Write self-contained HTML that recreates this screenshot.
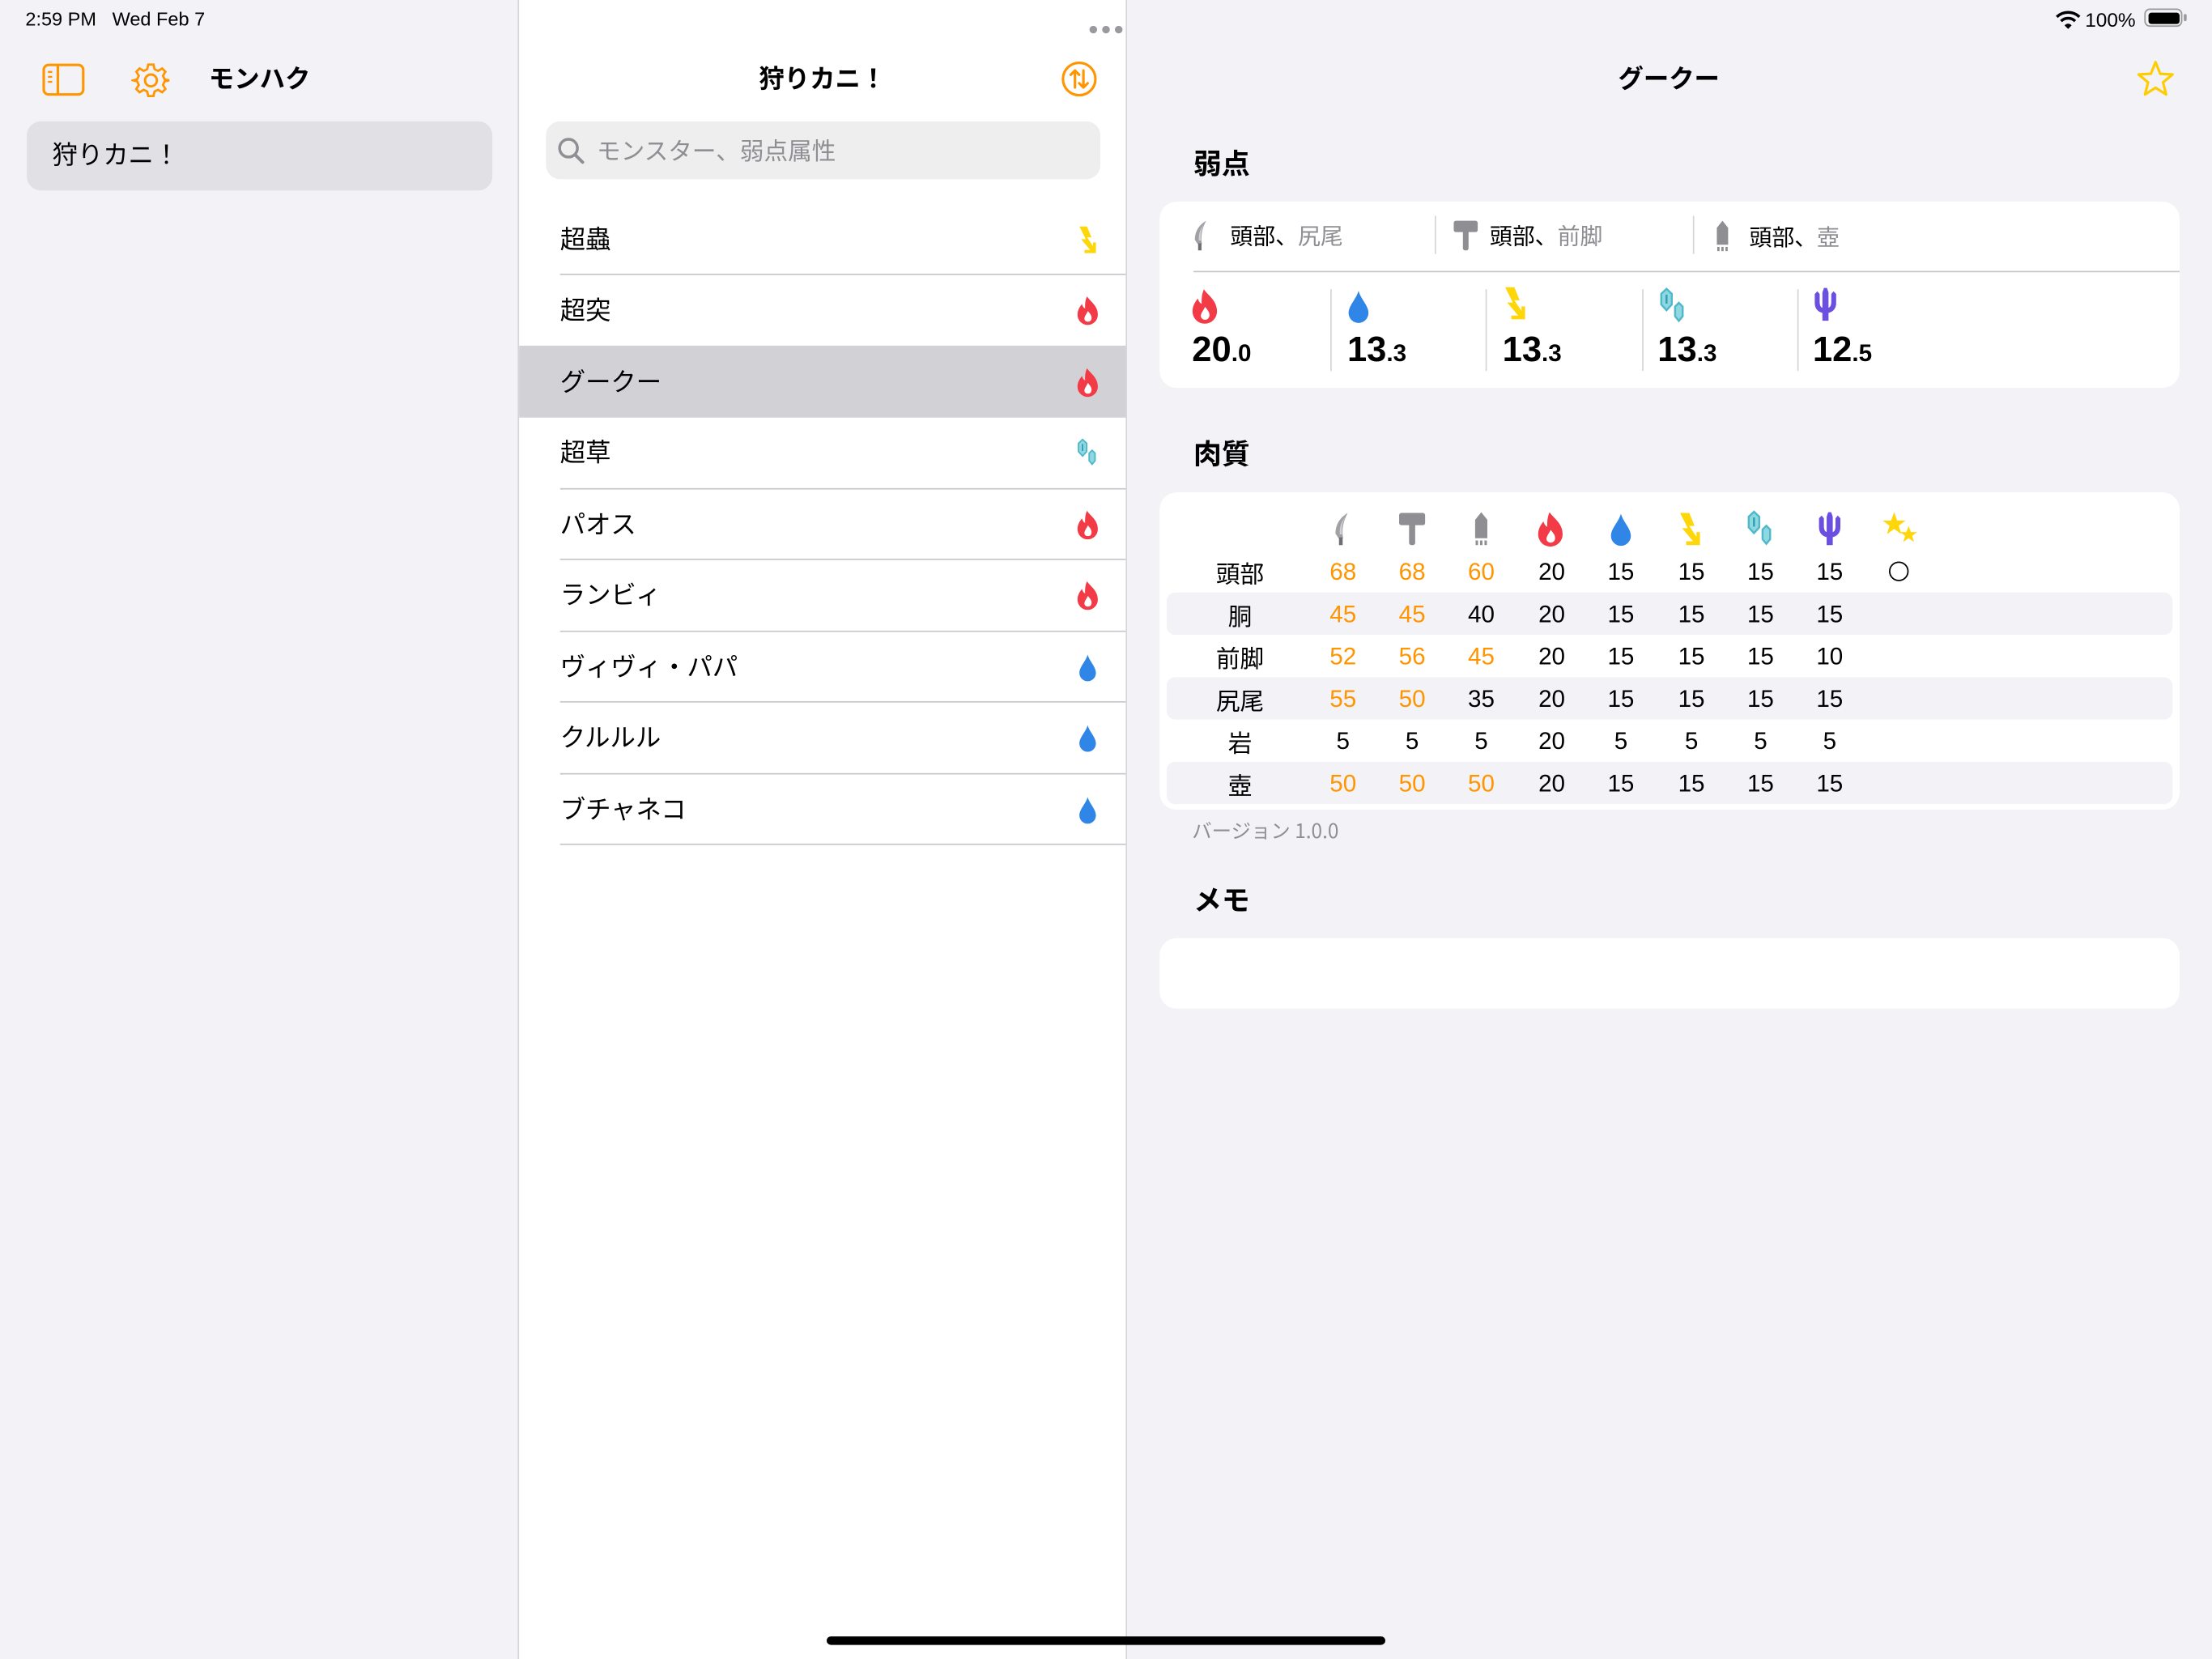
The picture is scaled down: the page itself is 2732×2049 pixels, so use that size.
<!DOCTYPE html>
<html><head><meta charset="utf-8">
<style>
html,body{margin:0;padding:0;width:2732px;height:2048px;overflow:hidden;background:#f2f2f7}
#w{position:absolute;left:0;top:0;width:1568px;height:1176px;transform:scale(1.742347);transform-origin:0 0;font-family:"Liberation Sans","Noto Sans CJK JP",sans-serif;color:#000}
.a{position:absolute}
.jp{font-family:"Noto Sans CJK JP","Liberation Sans",sans-serif}
.t{position:absolute;white-space:nowrap;line-height:1}
.row{position:absolute;left:368px;width:430px;height:50px}
.row .n{position:absolute;left:29px;top:13px;font-size:18px;line-height:22px}
.row .i{position:absolute;left:394px;top:14px;width:18px;height:22px}
.sep{position:absolute;left:397px;width:401px;height:1px;background:#c8c8cc}
.num{position:absolute;font-size:25px;font-weight:bold;line-height:1}
.num small{font-size:17px}
.c{position:absolute;width:40px;text-align:center;font-size:17px;line-height:20px}
.o{color:#ff9500}
.stripe{position:absolute;left:827px;width:713px;height:30px;background:#f2f2f7;border-radius:6px}
</style></head><body>
<svg width="0" height="0" style="position:absolute">
<defs>
<symbol id="fire" viewBox="0 0 20 24"><path fill="#f23b46" d="M9.5 1C12 5 18 8 18 15.5A8 8 0 0 1 2 15.5C2 12 3.5 9.5 5.5 7C6 8.8 6.8 10 8 10.5C7.8 7 8.2 3.5 9.5 1Z"/><path fill="#fff" d="M10.2 12.5C12 14.7 13.5 16.3 13 18.8A2.9 2.9 0 0 1 7.4 18.8C7.4 16.5 9.2 14.8 10.2 12.5Z"/></symbol>
<symbol id="water" viewBox="0 0 20 24"><path fill="#2f86e6" d="M10 2C11.5 7.5 16.5 11.5 16.5 16.5A6.5 6.5 0 0 1 3.5 16.5C3.5 11.5 8.5 7.5 10 2Z"/></symbol>
<symbol id="thunder" viewBox="0 0 20 24"><path fill="#ffd60a" d="M3.5 1.5H9.5L13 10H9.5L14.2 17V14H16.5V22.5H7.5V20H12L4.8 11.5H8.5Z"/></symbol>
<symbol id="ice" viewBox="0 0 20 24"><path fill="#8fd8e2" stroke="#4fb8c9" stroke-width="1.2" d="M6 1.5L9.2 4.5V11L6 14.5L2.8 11V4.5Z"/><path fill="none" stroke="#2f9fb4" stroke-width="1.2" d="M6 5V10.5"/><path fill="#8fd8e2" stroke="#4fb8c9" stroke-width="1.2" d="M13.5 10L15.8 12.3V18.2L13.5 21L11.2 18.2V12.3Z"/></symbol>
<symbol id="dragon" viewBox="0 0 20 24"><path fill="#6b4fe0" d="M9 1L11 1L12 4V14C13.3 13.5 13.8 12 13.8 10V5L15.3 3.2L17 5V11C17 14.8 14.5 16.8 12 17.3V22.5H8V17.3C5.5 16.8 3 14.8 3 11V5L4.7 3.2L6.2 5V10C6.2 12 6.7 13.5 8 14V4Z"/></symbol>
<symbol id="cut" viewBox="0 0 20 24"><path fill="#a0a0a5" d="M14 1.5C9 4.5 6 9 6 15L8 18H11C10 12.5 11 7 14 1.5Z"/><path fill="#6e6e73" d="M8.3 17.5H10.7V22.5H8.3Z"/><path fill="#d1d1d6" d="M12.5 4C10.5 7.5 9.8 11 10.3 15.5L8.8 15.5C8.5 11 9.8 7 12.5 4Z"/></symbol>
<symbol id="hammer" viewBox="0 0 20 24"><rect x="1.5" y="1.5" width="17" height="8" rx="1.5" fill="#8e8e93"/><rect x="8" y="8" width="4" height="14.5" rx="1.5" fill="#8e8e93"/></symbol>
<symbol id="shot" viewBox="0 0 20 24"><path fill="#8e8e93" d="M10 1L14 6V18H6V6Z"/><rect x="6.3" y="19.5" width="1.6" height="3" fill="#8e8e93"/><rect x="9.2" y="19.5" width="1.6" height="3" fill="#8e8e93"/><rect x="12.1" y="19.5" width="1.6" height="3" fill="#8e8e93"/></symbol>
<symbol id="stars" viewBox="0 0 24 24"><path fill="#ffd60a" d="M8 1L10 6.5H15.5L11 9.8L12.7 15.3L8 12L3.3 15.3L5 9.8L0.5 6.5H6Z"/><path fill="#ffd60a" d="M17.5 10L19 14H23L19.8 16.5L21 20.5L17.5 18L14 20.5L15.2 16.5L12 14H16Z"/></symbol>
</defs></svg>
<div id="w">
<div class="a" style="left:0;top:0;width:367px;height:1176px;background:#f2f2f7"></div>
<div class="a" style="left:367px;top:0;width:1px;height:1176px;background:#d6d6da"></div>
<div class="a" style="left:368px;top:0;width:430px;height:1176px;background:#fff"></div>
<div class="a" style="left:798px;top:0;width:1px;height:1176px;background:#d6d6da"></div>
<div class="a" style="left:799px;top:0;width:769px;height:1176px;background:#f2f2f7"></div>

<div class="t" style="left:18px;top:7px;font-size:13.5px">2:59 PM&nbsp;&nbsp;&nbsp;Wed Feb 7</div>
<div class="a" style="left:772px;top:11px"><svg width="26" height="6"><circle cx="3" cy="3" r="2.7" fill="#9a9a9e"/><circle cx="12" cy="3" r="2.7" fill="#9a9a9e"/><circle cx="21" cy="3" r="2.7" fill="#9a9a9e"/></svg></div>
<svg class="a" style="left:1457px;top:7px" width="18" height="14" viewBox="0 0 18 14"><path d="M1 5A11.5 11.5 0 0 1 17 5" stroke="#000" stroke-width="2" fill="none"/><path d="M4 8A7 7 0 0 1 14 8" stroke="#000" stroke-width="2" fill="none"/><path d="M6.5 11A3.2 3.2 0 0 1 11.5 11L9 13.5Z" fill="#000"/></svg>
<div class="t" style="left:1478px;top:7px;font-size:14px">100%</div>
<div class="a" style="left:1520px;top:6px;width:27px;height:13px;border:1.3px solid #999;border-radius:4px;box-sizing:border-box"></div>
<div class="a" style="left:1522.5px;top:8.5px;width:22px;height:8px;background:#000;border-radius:2px"></div>
<div class="a" style="left:1548px;top:10px;width:1.5px;height:5px;background:#999;border-radius:1px"></div>

<svg class="a" style="left:30px;top:45px" width="30" height="23" viewBox="0 0 30 23"><rect x="1" y="1" width="28" height="21" rx="3.5" fill="none" stroke="#ff9500" stroke-width="1.8"/><line x1="11" y1="1" x2="11" y2="22" stroke="#ff9500" stroke-width="1.8"/><line x1="4" y1="6" x2="7" y2="6" stroke="#ff9500" stroke-width="1.4"/><line x1="4" y1="9.5" x2="7" y2="9.5" stroke="#ff9500" stroke-width="1.4"/><line x1="4" y1="13" x2="7" y2="13" stroke="#ff9500" stroke-width="1.4"/></svg>
<svg class="a" style="left:93px;top:43px" width="28" height="28" viewBox="0 0 28 28"><g fill="none" stroke="#ff9500" stroke-width="1.7"><path d="M12 2H16L16.8 5.5L19.5 6.8L22.6 4.9L25.1 7.4L23.2 10.5L24.5 13.2L28 14V14L24.5 14.8L23.2 17.5L25.1 20.6L22.6 23.1L19.5 21.2L16.8 22.5L16 26H12L11.2 22.5L8.5 21.2L5.4 23.1L2.9 20.6L4.8 17.5L3.5 14.8L0.5 14L3.5 13.2L4.8 10.5L2.9 7.4L5.4 4.9L8.5 6.8L11.2 5.5Z" transform="scale(0.93) translate(1,1)"/><circle cx="14" cy="14" r="4.2"/></g></svg>
<div class="t jp" style="left:148px;top:46px;font-size:18px;font-weight:bold">モンハク</div>
<div class="a" style="left:19px;top:86px;width:330px;height:49px;background:#e0e0e5;border-radius:10px"></div>
<div class="t jp" style="left:37px;top:100px;font-size:18px">狩りカニ！</div>

<div class="t jp" style="left:538px;top:46px;font-size:18px;font-weight:bold">狩りカニ！</div>
<svg class="a" style="left:752px;top:43px" width="26" height="26" viewBox="0 0 26 26"><g fill="none" stroke="#ff9500" stroke-width="1.8" stroke-linecap="round" stroke-linejoin="round"><circle cx="13" cy="13" r="11.5"/><path d="M10 19V7M7 10L10 7L13 10"/><path d="M16 7V19M13 16L16 19L19 16"/></g></svg>
<div class="a" style="left:387px;top:86px;width:393px;height:41px;background:#eeeeef;border-radius:10px"></div>
<svg class="a" style="left:395px;top:97px" width="20" height="20" viewBox="0 0 20 20"><circle cx="8" cy="8" r="6.3" fill="none" stroke="#8e8e93" stroke-width="2"/><line x1="12.6" y1="12.6" x2="18" y2="18" stroke="#8e8e93" stroke-width="2.2" stroke-linecap="round"/></svg>
<div class="t jp" style="left:423px;top:97px;font-size:17px;color:#8e8e93">モンスター、弱点属性</div>

<div class="a" style="left:368px;top:245px;width:430px;height:51px;background:#d1d1d6"></div>
<div class="row" style="top:145px"><div class="n jp">超蟲</div><svg class="i"><use href="#thunder"/></svg></div>
<div class="sep" style="top:194px"></div>
<div class="row" style="top:195px"><div class="n jp">超突</div><svg class="i"><use href="#fire"/></svg></div>
<div class="row" style="top:246px"><div class="n jp">グークー</div><svg class="i"><use href="#fire"/></svg></div>
<div class="row" style="top:296px"><div class="n jp">超草</div><svg class="i"><use href="#ice"/></svg></div>
<div class="sep" style="top:346px"></div>
<div class="row" style="top:347px"><div class="n jp">パオス</div><svg class="i"><use href="#fire"/></svg></div>
<div class="sep" style="top:396px"></div>
<div class="row" style="top:397px"><div class="n jp">ランビィ</div><svg class="i"><use href="#fire"/></svg></div>
<div class="sep" style="top:447px"></div>
<div class="row" style="top:448px"><div class="n jp">ヴィヴィ・パパ</div><svg class="i"><use href="#water"/></svg></div>
<div class="sep" style="top:497px"></div>
<div class="row" style="top:498px"><div class="n jp">クルルル</div><svg class="i"><use href="#water"/></svg></div>
<div class="sep" style="top:548px"></div>
<div class="row" style="top:549px"><div class="n jp">ブチャネコ</div><svg class="i"><use href="#water"/></svg></div>
<div class="sep" style="top:598px"></div>

<div class="t jp" style="left:1147px;top:46px;font-size:18px;font-weight:bold">グークー</div>
<svg class="a" style="left:1514px;top:42px" width="28" height="28" viewBox="0 0 28 28"><path d="M14 2L17.3 10.3L26 10.8L19.3 16.4L21.5 25L14 20.2L6.5 25L8.7 16.4L2 10.8L10.7 10.3Z" fill="none" stroke="#ffcc00" stroke-width="1.8" stroke-linejoin="round"/></svg>

<div class="t jp" style="left:846px;top:105px;font-size:20px;font-weight:bold">弱点</div>
<div class="a" style="left:822px;top:143px;width:723px;height:132px;background:#fff;border-radius:12px"></div>
<svg class="a" style="left:841px;top:155px" width="20" height="24"><use href="#cut"/></svg>
<div class="t jp" style="left:872px;top:158px;font-size:16px">頭部、<span style="color:#8e8e93">尻尾</span></div>
<div class="a" style="left:1017px;top:153px;width:1px;height:27px;background:#d6d6da"></div>
<svg class="a" style="left:1029px;top:155px" width="20" height="24"><use href="#hammer"/></svg>
<div class="t jp" style="left:1056px;top:158px;font-size:16px">頭部、<span style="color:#8e8e93">前脚</span></div>
<div class="a" style="left:1200px;top:153px;width:1px;height:27px;background:#d6d6da"></div>
<svg class="a" style="left:1211px;top:155px" width="20" height="25"><use href="#shot"/></svg>
<div class="t jp" style="left:1240px;top:159px;font-size:16px">頭部、<span style="color:#8e8e93">壺</span></div>
<div class="a" style="left:846px;top:192px;width:699px;height:1px;background:#c8c8cc"></div>

<svg class="a" style="left:843px;top:204px" width="22" height="26"><use href="#fire"/></svg>
<svg class="a" style="left:952px;top:204px" width="22" height="26"><use href="#water"/></svg>
<svg class="a" style="left:1063px;top:202px" width="22" height="26"><use href="#thunder"/></svg>
<svg class="a" style="left:1174px;top:203px" width="24" height="28" viewBox="0 0 20 24"><use href="#ice"/></svg>
<svg class="a" style="left:1283px;top:203px" width="22" height="26"><use href="#dragon"/></svg>
<div class="a" style="left:943px;top:205px;width:1px;height:58px;background:#d6d6da"></div>
<div class="a" style="left:1053px;top:205px;width:1px;height:58px;background:#d6d6da"></div>
<div class="a" style="left:1164px;top:205px;width:1px;height:58px;background:#d6d6da"></div>
<div class="a" style="left:1274px;top:205px;width:1px;height:58px;background:#d6d6da"></div>
<div class="num" style="left:845px;top:236px">20<small>.0</small></div>
<div class="num" style="left:955px;top:236px">13<small>.3</small></div>
<div class="num" style="left:1065px;top:236px">13<small>.3</small></div>
<div class="num" style="left:1175px;top:236px">13<small>.3</small></div>
<div class="num" style="left:1285px;top:236px">12<small>.5</small></div>

<div class="t jp" style="left:846px;top:311px;font-size:20px;font-weight:bold">肉質</div>
<div class="a" style="left:822px;top:349px;width:723px;height:225px;background:#fff;border-radius:12px"></div>
<div class="stripe" style="top:420px"></div>
<div class="stripe" style="top:480px"></div>
<div class="stripe" style="top:540px"></div>
<svg class="a" style="left:940px;top:362px" width="22" height="26"><use href="#cut"/></svg>
<svg class="a" style="left:990px;top:362px" width="22" height="26"><use href="#hammer"/></svg>
<svg class="a" style="left:1039px;top:362px" width="22" height="26"><use href="#shot"/></svg>
<svg class="a" style="left:1088px;top:362px" width="22" height="26"><use href="#fire"/></svg>
<svg class="a" style="left:1138px;top:362px" width="22" height="26"><use href="#water"/></svg>
<svg class="a" style="left:1187px;top:362px" width="22" height="26"><use href="#thunder"/></svg>
<svg class="a" style="left:1236px;top:361px" width="24" height="28" viewBox="0 0 20 24"><use href="#ice"/></svg>
<svg class="a" style="left:1286px;top:362px" width="22" height="26"><use href="#dragon"/></svg>
<svg class="a" style="left:1334px;top:362px" width="26" height="26"><use href="#stars"/></svg>

<div class="jp">
<div class="c" style="left:859px;top:396px">頭部</div>
<div class="c" style="left:859px;top:426px">胴</div>
<div class="c" style="left:859px;top:456px">前脚</div>
<div class="c" style="left:859px;top:486px">尻尾</div>
<div class="c" style="left:859px;top:516px">岩</div>
<div class="c" style="left:859px;top:546px">壺</div>
</div>
<div class="c o" style="left:932px;top:396px">68</div><div class="c o" style="left:981px;top:396px">68</div><div class="c o" style="left:1030px;top:396px">60</div><div class="c" style="left:1080px;top:396px">20</div><div class="c" style="left:1129px;top:396px">15</div><div class="c" style="left:1179px;top:396px">15</div><div class="c" style="left:1228px;top:396px">15</div><div class="c" style="left:1277px;top:396px">15</div>
<div class="a" style="left:1339px;top:398px;width:14px;height:14px;border:1.5px solid #000;border-radius:50%;box-sizing:border-box"></div>
<div class="c o" style="left:932px;top:426px">45</div><div class="c o" style="left:981px;top:426px">45</div><div class="c" style="left:1030px;top:426px">40</div><div class="c" style="left:1080px;top:426px">20</div><div class="c" style="left:1129px;top:426px">15</div><div class="c" style="left:1179px;top:426px">15</div><div class="c" style="left:1228px;top:426px">15</div><div class="c" style="left:1277px;top:426px">15</div>
<div class="c o" style="left:932px;top:456px">52</div><div class="c o" style="left:981px;top:456px">56</div><div class="c o" style="left:1030px;top:456px">45</div><div class="c" style="left:1080px;top:456px">20</div><div class="c" style="left:1129px;top:456px">15</div><div class="c" style="left:1179px;top:456px">15</div><div class="c" style="left:1228px;top:456px">15</div><div class="c" style="left:1277px;top:456px">10</div>
<div class="c o" style="left:932px;top:486px">55</div><div class="c o" style="left:981px;top:486px">50</div><div class="c" style="left:1030px;top:486px">35</div><div class="c" style="left:1080px;top:486px">20</div><div class="c" style="left:1129px;top:486px">15</div><div class="c" style="left:1179px;top:486px">15</div><div class="c" style="left:1228px;top:486px">15</div><div class="c" style="left:1277px;top:486px">15</div>
<div class="c" style="left:932px;top:516px">5</div><div class="c" style="left:981px;top:516px">5</div><div class="c" style="left:1030px;top:516px">5</div><div class="c" style="left:1080px;top:516px">20</div><div class="c" style="left:1129px;top:516px">5</div><div class="c" style="left:1179px;top:516px">5</div><div class="c" style="left:1228px;top:516px">5</div><div class="c" style="left:1277px;top:516px">5</div>
<div class="c o" style="left:932px;top:546px">50</div><div class="c o" style="left:981px;top:546px">50</div><div class="c o" style="left:1030px;top:546px">50</div><div class="c" style="left:1080px;top:546px">20</div><div class="c" style="left:1129px;top:546px">15</div><div class="c" style="left:1179px;top:546px">15</div><div class="c" style="left:1228px;top:546px">15</div><div class="c" style="left:1277px;top:546px">15</div>

<div class="t jp" style="left:845px;top:582px;font-size:14px;color:#8e8e93">バージョン 1.0.0</div>
<div class="t jp" style="left:846px;top:627px;font-size:20px;font-weight:bold">メモ</div>
<div class="a" style="left:822px;top:665px;width:723px;height:50px;background:#fff;border-radius:12px"></div>

<div class="a" style="left:586px;top:1160px;width:396px;height:6px;background:#000;border-radius:3px"></div>
</div>
</body></html>
